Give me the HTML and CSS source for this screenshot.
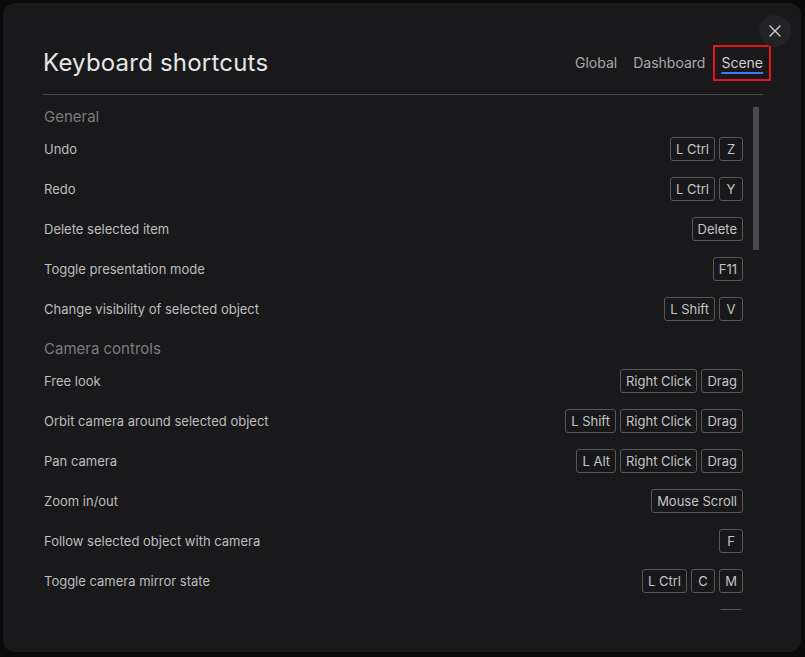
FILE: index.html
```html
<!DOCTYPE html>
<html lang="en">
<head>
    <meta charset="UTF-8">
    <meta name="viewport" content="width=device-width, initial-scale=1.0">
    <title>Keyboard shortcuts</title>
    <link rel="stylesheet" href="styles.css">
</head>
<body>
    <div class="dialog">
        <button class="close-btn" aria-label="Close">
            <svg width="12" height="12" viewBox="0 0 12 12">
                <path d="M1 1 L11 11 M11 1 L1 11" stroke="#d0d0d0" stroke-width="1.4" stroke-linecap="round"/>
            </svg>
        </button>

        <div class="header">
            <h2>Keyboard shortcuts</h2>
            <div class="tabs">
                <span class="tab">Global</span>
                <span class="tab">Dashboard</span>
                <span class="tab active">Scene</span>
            </div>
        </div>
        <div class="divider"></div>

        <div class="body">
            <div class="list">
                <div class="section">General</div>
                <div class="row"><span>Undo</span><div class="keys"><kbd>L Ctrl</kbd><kbd>Z</kbd></div></div>
                <div class="row"><span>Redo</span><div class="keys"><kbd>L Ctrl</kbd><kbd>Y</kbd></div></div>
                <div class="row"><span>Delete selected item</span><div class="keys"><kbd>Delete</kbd></div></div>
                <div class="row"><span>Toggle presentation mode</span><div class="keys"><kbd>F11</kbd></div></div>
                <div class="row"><span>Change visibility of selected object</span><div class="keys"><kbd>L Shift</kbd><kbd>V</kbd></div></div>

                <div class="section">Camera controls</div>
                <div class="row"><span>Free look</span><div class="keys"><kbd>Right Click</kbd><kbd>Drag</kbd></div></div>
                <div class="row"><span>Orbit camera around selected object</span><div class="keys"><kbd>L Shift</kbd><kbd>Right Click</kbd><kbd>Drag</kbd></div></div>
                <div class="row"><span>Pan camera</span><div class="keys"><kbd>L Alt</kbd><kbd>Right Click</kbd><kbd>Drag</kbd></div></div>
                <div class="row"><span>Zoom in/out</span><div class="keys"><kbd>Mouse Scroll</kbd></div></div>
                <div class="row"><span>Follow selected object with camera</span><div class="keys"><kbd>F</kbd></div></div>
                <div class="row"><span>Toggle camera mirror state</span><div class="keys"><kbd>L Ctrl</kbd><kbd>C</kbd><kbd>M</kbd></div></div>
                <div class="row"><span></span><div class="keys"><kbd class="blank"></kbd></div></div>
            </div>
            <div class="rail">
                <div class="thumb"></div>
            </div>
        </div>
    </div>
</body>
</html>
```

FILE: styles.css
```css
* {
    margin: 0;
    padding: 0;
    box-sizing: border-box;
}
body {
    font-family: Inter, "Noto Sans", sans-serif;
    background: #0a0a0b;
    width: 805px;
    height: 657px;
    overflow: hidden;
}
.dialog {
    position: relative;
    margin: 3px 0 0 3px;
    width: 798px;
    height: 649px;
    background: #19191b;
    border-radius: 12px;
    padding: 37px 38px 42px 40px;
}
.close-btn {
    position: absolute;
    top: 12px;
    right: 10px;
    width: 32px;
    height: 32px;
    border-radius: 50%;
    border: none;
    background: #232325;
    display: flex;
    align-items: center;
    justify-content: center;
}
.header {
    height: 44px;
    display: flex;
    align-items: center;
    justify-content: space-between;
}
.header h2 {
    font-size: 24px;
    font-weight: 400;
    color: #e6e6e6;
    letter-spacing: 0.2px;
}
.tabs {
    display: flex;
    gap: 16px;
    font-size: 14px;
    line-height: 20px;
    padding-top: 2px;
    color: #a8a8a8;
}
.tab.active {
    color: #cfcfcf;
    text-decoration: underline;
    text-decoration-color: #3b7cf6;
    text-decoration-thickness: 2px;
    text-underline-offset: 4px;
    outline: 2px solid #e4141c;
    outline-offset: 6px;
}
.divider {
    margin-top: 10px;
    height: 1px;
    background: #4a4a4c;
}
.body {
    display: flex;
    height: 515px;
}
.list {
    flex: 1;
    overflow: hidden;
    padding-top: 10px;
}
.section {
    height: 24px;
    line-height: 24px;
    font-size: 15px;
    color: #7c7c7e;
    padding-left: 1px;
}
.row + .section {
    margin-top: 8px;
}
.row {
    height: 40px;
    display: flex;
    align-items: center;
    justify-content: space-between;
    font-size: 13px;
    color: #bdbdbd;
    padding-left: 1px;
}
.keys {
    display: flex;
    gap: 4px;
}
kbd {
    font-family: Inter, "Noto Sans", sans-serif;
    font-size: 13px;
    color: #c4c4c4;
    height: 24px;
    line-height: 22px;
    min-width: 24px;
    padding: 0 5px;
    text-align: center;
    border: 1px solid #58585a;
    border-radius: 3px;
    background: #18181a;
}
.rail {
    width: 6px;
    margin-left: 10px;
    margin-right: 4px;
    padding-top: 12px;
}
.thumb {
    height: 143px;
    background: #4a4a4c;
}
```
